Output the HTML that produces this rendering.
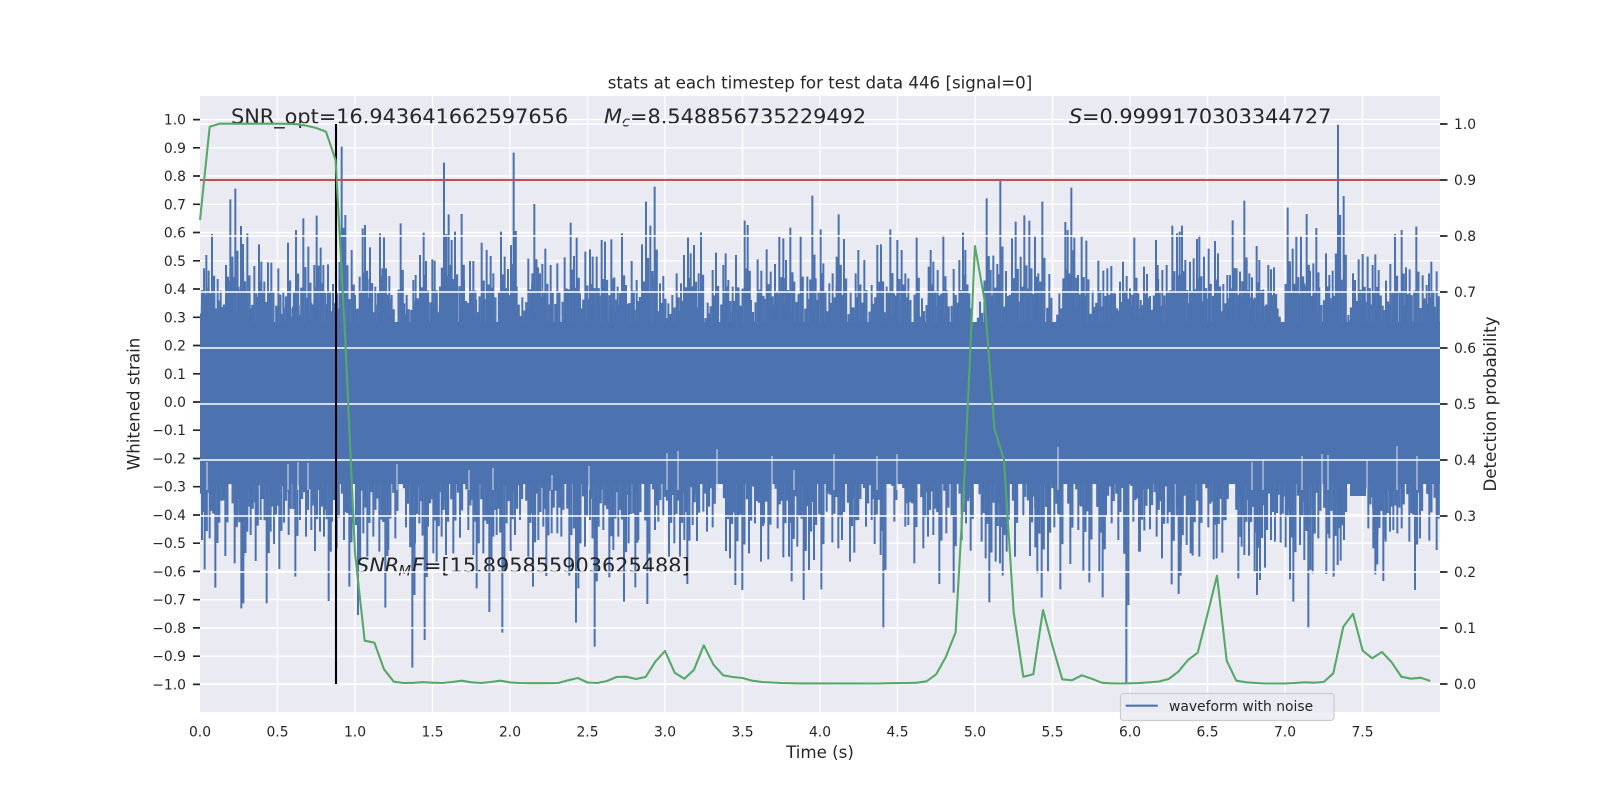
<!DOCTYPE html>
<html><head><meta charset="utf-8"><style>html,body{margin:0;padding:0;background:#fff;width:1600px;height:800px;overflow:hidden}svg{display:block}text{font-family:"DejaVu Sans","Liberation Sans",sans-serif;fill:#262626}</style></head><body>
<svg width="1600" height="800" viewBox="0 0 1600 800" xmlns="http://www.w3.org/2000/svg">
<defs><clipPath id="ax"><rect x="200" y="96" width="1240" height="616"/></clipPath>
<path id="a" d="M186 690V800M192 625V800M199 585V800M206 632V800M216 522V800M223 700V800M233 657V800M242 692V800M258 615V800M264 650V800M271 418V800M277 610V800M286 386V800M296 680V800M303 498V800M309 552V800M322 520V800M329 700V800M343 618V800M357 553V800M364 605V800M373 665V800M384 607V800M394 608V800M415 625V800M430 695V800M444 548V800M452 745V800M459 740V800M468 510V800M476 735V800M490 475V800M505 560V800M514 728V800M523 615V800M530 467V800M542 563V800M550 615V800M564 613V800M579 672V800M591 700V800M605 260V800M616 465V800M635 570V800M645 705V800M659 650V800M668 505V800M675 495V800M683 657V800M690 562V800M706 680V800M720 520V800M727 625V800M732 532V800M738 625V800M748 648V800M755 705V800M782 490V800M793 730V800M800 705V800M820 660V800M827 645V800M840 585V800M851 518V800M858 603V800M877 598V800M884 602V800M900 680V800M906 625V800M912 308V800M919 522V800M926 463V800M935 540V800M945 515V800M965 462V800M972 660V800M990 603V800M1000 603V800M1008 720V800M1025 548V800M1040 570V800M1052 588V800M1060 640V800M1083 515V800M1094 590V800M1104 627V800M1113 555V800M1121 278V800M1130 680V800M1147 712V800M1165 596V800M1177 640V800M1183 432V800M1194 622V800M1200 640V800M1207 612V800M1216 566V800M1232 615V800M1252 610V800M1274 592V800M1292 488V800M1302 588V800M1310 533V800M1320 700V800M1336 575V800M1350 568V800M1358 590V800M1370 590V800M1385 540V800M1395 545V800M1414 538V800M1423 652V800M1433 680V800M1446 520V800M1458 675V800M1475 603V800M1490 660V800"/>
<path id="b" d="M6 553V800M18 425V800M31 497V800M44 380V800M60 670V800M70 648V800M85 730V800M97 705V800M110 640V800M123 670V800M132 585V800M144 533V800M152 580V800M162 555V800M176 640V800M183 517V800M203 728V800M218 630V800M228 578V800M250 615V800M257 580V800M265 660V800M278 680V800M288 585V800M296 685V800M314 482V800M323 495V800M333 720V800M353 598V800M364 632V800M380 568V800M392 635V800M405 612V800M418 530V800M430 535V800M438 600V800M451 503V800M463 665V800M482 527V800M502 650V800M517 407V800M527 655V800M542 508V800M550 610V800M568 670V800M578 640V800M590 590V800M596 463V800M612 537V800M632 695V800M647 640V800M655 570V800M673 600V800M695 675V800M712 555V800M723 553V800M740 680V800M751 508V800M762 700V800M772 540V800M785 570V800M796 640V800M805 655V800M830 533V800M846 715V800M866 620V800M872 570V800M880 605V800M893 630V800M910 525V800M920 690V800M941 627V800M958 600V800M969 518V800M976 570V800M988 700V800M1020 725V800M1040 415V800M1052 630V800M1060 587V800M1072 612V800M1081 363V800M1098 633V800M1116 535V800M1127 485V800M1142 590V800M1153 466V800M1168 482V800M1185 527V800M1195 640V800M1207 425V800M1228 642V800M1258 700V800M1270 655V800M1276 486V800M1283 510V800M1294 383V800M1303 533V800M1314 645V800M1325 530V800M1339 542V800M1358 692V800M1375 602V800M1390 632V800M1402 625V800M1414 618V800M1425 700V800M1440 665V800M1449 605V800M1460 648V800M1470 685V800M1483 533V800M1495 700V800"/>
<path id="c" d="M122 720V800M132 620V800M141 642V800M150 708V800M168 540V800M173 615V800M187 630V800M200 615V800M217 497V800M222 652V800M231 520V800M239 515V800M246 497V800M256 600V800M270 605V800M281 595V800M291 537V800M298 525V800M312 590V800M326 566V800M345 543V800M354 580V800M370 672V800M382 645V800M390 645V800M398 481V800M410 625V800M420 635V800M433 422V800M440 600V800M448 640V800M456 652V800M470 558V800M478 600V800M490 688V800M505 615V800M513 628V800M522 622V800M533 745V800M563 443V800M570 615V800M578 566V800M589 530V800M603 526V800M613 670V800M620 462V800M630 632V800M640 610V800M649 504V800M658 682V800M678 580V800M688 645V800M698 632V800M714 190V800M731 408V800M745 765V800M759 640V800M765 660V800M776 598V800M788 582V800M803 590V800M818 615V800M826 583V800M836 630V800M848 737V800M858 662V800M871 612V800M885 522V800M905 510V800M918 622V800M929 628V800M949 500V800M968 646V800M980 675V800M987 640V800M994 605V800M1010 634V800"/>
<path id="d" d="M186 60V300M194 60V388M209 60V295M226 60V443M238 60V248M256 60V348M284 60V370M291 60V240M304 60V505M310 60V490M322 60V275M332 60V285M347 60V363M362 60V240M380 60V490M392 60V275M402 60V312M418 60V387M432 60V248M446 60V285M466 60V410M480 60V240M498 60V290M514 60V270M525 60V333M540 60V275M552 60V290M566 60V483M576 60V245M590 60V325M612 60V300M628 60V440M654 60V525M670 60V280M682 60V350M700 60V290M718 60V335M736 60V503M745 60V330M766 60V295M798 60V262M817 60V683M825 60V310M838 60V250M854 60V600M864 60V260M880 60V340M890 60V365M905 60V290M918 60V345M940 60V340M960 60V293M985 60V270M1000 60V345M1010 60V445M1030 60V340M1048 60V516M1060 60V290M1070 60V285M1087 60V578M1100 60V250M1112 60V333M1125 60V285M1140 60V240M1165 60V350M1179 60V440M1195 60V300M1210 60V260M1219 60V408M1235 60V280M1252 60V280M1264 60V290M1288 60V407M1308 60V548M1315 60V445M1335 60V320M1350 60V240M1364 60V620M1376 60V260M1390 60V270M1408 60V412M1420 60V330M1435 60V290M1452 60V485M1466 60V310M1486 60V442M1495 60V300"/>
<path id="e" d="M22 60V492M45 60V270M55 60V245M70 60V230M87 60V350M103 60V310M120 60V350M133 60V300M142 60V432M158 60V255M171 60V303M190 60V215M201 60V275M218 60V262M258 60V333M270 60V355M286 60V435M297 60V230M307 60V450M327 60V340M345 60V250M363 60V365M372 60V250M385 60V358M413 60V265M430 60V352M447 60V350M455 60V424M472 60V320M491 60V480M507 60V390M522 60V360M544 60V448M560 60V215M577 60V308M595 60V325M606 60V300M630 60V365M643 60V338M655 60V240M678 60V260M695 60V240M704 60V312M722 60V345M730 60V567M763 60V245M796 60V260M805 60V255M823 60V370M850 60V325M864 60V290M880 60V285M898 60V432M919 60V280M941 60V458M965 60V300M978 60V250M992 60V332M1025 60V305M1037 60V355M1048 60V487M1067 60V365M1080 60V370M1088 60V407M1100 60V335M1125 60V350M1150 60V230M1170 60V348M1186 60V322M1192 60V400M1205 60V473M1224 60V395M1243 60V262M1261 60V448M1291 60V372M1315 60V270M1330 60V392M1348 60V427M1378 60V395M1388 60V472M1398 60V225M1415 60V250M1435 60V300M1453 60V260M1459 60V730M1480 60V245M1497 60V335"/>
<path id="f" d="M240 60V335M253 60V272M270 60V268M290 60V290M306 60V355M323 60V250M335 60V433M356 60V462M362 60V407M380 60V315M392 60V340M398 60V347M418 60V350M445 60V262M461 60V358M470 60V355M487 60V338M497 60V240M535 60V415M545 60V320M553 60V345M567 60V347M584 60V395M591 60V465M600 60V420M615 60V383M633 60V300M645 60V305M662 60V308M677 60V322M690 60V418M700 60V485M720 60V315M733 60V360M745 60V567M758 60V400M775 60V295M799 60V402M808 60V295M821 60V410M833 60V375M842 60V362M852 60V300M925 60V265M940 60V325M946 60V403M952 60V373M970 60V423M977 60V305M990 60V275M1000 60V270M1012 60V280M1025 60V265M1048 60V305M1065 60V450M1080 60V295M1108 60V302M1130 60V330"/>
</defs>
<rect width="1600" height="800" fill="#fff"/>
<rect x="200" y="96" width="1240" height="616" fill="#eaeaf2"/>
<path fill="none" stroke="#fff" stroke-width="1.4" d="M200 119.6H1440M200 147.8H1440M200 176H1440M200 204.3H1440M200 232.5H1440M200 260.8H1440M200 289H1440M200 317.3H1440M200 345.5H1440M200 373.8H1440M200 402H1440M200 430.2H1440M200 458.5H1440M200 486.7H1440M200 515H1440M200 543.2H1440M200 571.4H1440M200 599.7H1440M200 627.9H1440M200 656.2H1440M200 684.4H1440M277.5 96V712M355 96V712M432.5 96V712M510 96V712M587.5 96V712M665 96V712M742.5 96V712M820 96V712M897.5 96V712M975 96V712M1052.5 96V712M1130 96V712M1207.5 96V712M1285 96V712M1362.5 96V712"/>
<g clip-path="url(#ax)">
<rect x="200" y="322" width="1240" height="162" fill="#4c72b0"/>
<rect x="1350" y="484" width="16" height="12" fill="#4c72b0"/>
<g fill="none" stroke="#4c72b0" stroke-width="6">
<g transform="translate(140,60) scale(.33333)"><use href="#a" stroke-width="7" transform="translate(6,800) scale(1,.55) translate(0,-800)"/><use href="#a" stroke-width="7" transform="translate(-6,800) scale(1,.36) translate(0,-800)"/><use href="#a"/></g>
<g transform="translate(640,60) scale(.33333)"><use href="#b" stroke-width="7" transform="translate(6,800) scale(1,.55) translate(0,-800)"/><use href="#b" stroke-width="7" transform="translate(-6,800) scale(1,.36) translate(0,-800)"/><use href="#b"/></g>
<g transform="translate(1100,60) scale(.33333)"><use href="#c" stroke-width="7" transform="translate(6,800) scale(1,.55) translate(0,-800)"/><use href="#c" stroke-width="7" transform="translate(-6,800) scale(1,.36) translate(0,-800)"/><use href="#c"/></g>
<g transform="translate(140,440) scale(.33333)"><use href="#d" stroke-width="7" transform="translate(6,60) scale(1,.65) translate(0,-60)"/><use href="#d" stroke-width="7" transform="translate(-6,60) scale(1,.42) translate(0,-60)"/><use href="#d"/></g>
<g transform="translate(640,440) scale(.33333)"><use href="#e" stroke-width="7" transform="translate(6,60) scale(1,.65) translate(0,-60)"/><use href="#e" stroke-width="7" transform="translate(-6,60) scale(1,.42) translate(0,-60)"/><use href="#e"/></g>
<g transform="translate(1060,440) scale(.33333)"><use href="#f" stroke-width="7" transform="translate(6,60) scale(1,.65) translate(0,-60)"/><use href="#f" stroke-width="7" transform="translate(-6,60) scale(1,.42) translate(0,-60)"/><use href="#f"/></g>
</g>
<path fill="none" stroke="#c9d0e2" stroke-width="1.2" d="M207 462V490M288 464V490M298 462V490M308 463V490M397 464V490M469 470V490M493 468V490M552 475V490M589 466V490M667 453V490M678 451V490M717 449V490M772 456V490M794 470V490M834 454V490M877 456V490M897 454V490M1058 447V490M1252 462V490M1263 460V490M1302 456V490M1322 454V490M1328 455V490M1367 460V490M1397 446V490M1417 456V490"/>
</g>
<!-- annotations -->
<text x="231" y="123.3" font-size="20.83">SNR_opt=16.943641662597656</text>
<text x="604" y="123.3" font-size="20.83" font-style="oblique">M</text>
<text x="622" y="126.5" font-size="14.6" font-style="oblique">c</text>
<text x="630" y="123.3" font-size="20.83">=8.548856735229492</text>
<text x="1069" y="123.3" font-size="20.83" font-style="oblique">S</text>
<text x="1082" y="123.3" font-size="20.83">=0.9999170303344727</text>
<text x="356" y="572.3" font-size="20.83" font-style="oblique">SNR</text>
<text x="398.5" y="575.5" font-size="14.6" font-style="oblique">M</text>
<text x="412" y="572.3" font-size="20.83" font-style="oblique">F</text>
<text x="424" y="572.3" font-size="20.83">=[15.895855903625488]</text>
<!-- right-axis grid on top -->
<path fill="none" stroke="#fff" stroke-width="1.4" d="M200 124H1440M200 236H1440M200 292H1440M200 348H1440M200 404H1440M200 460H1440M200 516H1440M200 572H1440M200 628H1440M200 684H1440"/>
<path fill="none" stroke="#c44e52" stroke-width="2.08" d="M200 180H1440"/>
<path fill="none" stroke="#000" stroke-width="2.08" d="M336 124V684"/>
<path fill="none" stroke="#55a868" stroke-width="2.08" stroke-linejoin="round" d="M200 220L209.7 126.7L219.4 123.7L229 123.7L277.5 123.7L287.2 123.8L297 124.2L306.7 125.7L316.3 128L326 131.7L335.6 160L345.3 340L355 553L364.7 640.7L374.4 642.7L384 669.3L393.8 681.7L403.4 683L413 682.8L422.8 682.2L432.5 682.7L442 683L452 682L461.6 680.7L471.2 682.3L481 683L490.6 682L500.3 680.7L510 682.4L519.7 683L529.4 683.2L539 683.2L548.7 683.2L558.4 683L568 680.3L577.8 678L587.5 682.5L597.2 683L606.9 681L616.6 677L626.3 676.7L636 679L645.6 677L655.3 661.7L665 651L674.7 672.7L684.4 678.7L694 669.7L703.8 645.3L713.5 664.7L723.2 675.3L732.9 677L742.5 678L752.2 680.7L762 682L771.6 682.5L781.3 683L800 683.4L878 683.5L887.8 683.2L907 683L917 682.7L926.6 681.3L936.2 674.3L945.7 657.3L955.6 632.3L965.3 460L975 246L984.7 301L994.4 428.6L1004 460L1013.7 612.3L1023.3 676.7L1033.3 674.3L1043 610L1052.7 646.7L1062.3 679.3L1072 680.3L1081.7 675.3L1091.7 678.7L1101.7 682.7L1110.6 683.3L1120.3 683.5L1130 683.3L1139.7 683L1149.4 682.3L1159 681.5L1168.7 679L1178.3 671.7L1188 660L1197.7 652.7L1207.3 615L1217 575.7L1226.7 660.7L1236.3 680.7L1246.3 682.3L1256 683L1265.6 683.5L1285 683.5L1294.7 683L1304.4 682.3L1314 682.7L1323.7 682L1333.3 673.3L1343.3 626.7L1353 613.7L1362.7 650.7L1372.3 658.3L1382 652L1391.7 662.3L1401.3 676.7L1411 678.7L1420.7 677.7L1430.3 681"/>
<!-- ticks -->
<path fill="none" stroke="#262626" stroke-width="1.7" d="M193 119.6H200M193 147.8H200M193 176H200M193 204.3H200M193 232.5H200M193 260.8H200M193 289H200M193 317.3H200M193 345.5H200M193 373.8H200M193 402H200M193 430.2H200M193 458.5H200M193 486.7H200M193 515H200M193 543.2H200M193 571.4H200M193 599.7H200M193 627.9H200M193 656.2H200M193 684.4H200M1440 124H1447.5M1440 180H1447.5M1440 236H1447.5M1440 292H1447.5M1440 348H1447.5M1440 404H1447.5M1440 460H1447.5M1440 516H1447.5M1440 572H1447.5M1440 628H1447.5M1440 684H1447.5"/>
<g font-size="13.89" text-anchor="end">
<text x="186" y="124.6">1.0</text><text x="186" y="152.8">0.9</text><text x="186" y="181">0.8</text><text x="186" y="209.3">0.7</text><text x="186" y="237.5">0.6</text><text x="186" y="265.8">0.5</text><text x="186" y="294">0.4</text><text x="186" y="322.3">0.3</text><text x="186" y="350.5">0.2</text><text x="186" y="378.8">0.1</text><text x="186" y="407">0.0</text><text x="186" y="435.2">−0.1</text><text x="186" y="463.5">−0.2</text><text x="186" y="491.7">−0.3</text><text x="186" y="520">−0.4</text><text x="186" y="548.2">−0.5</text><text x="186" y="576.4">−0.6</text><text x="186" y="604.7">−0.7</text><text x="186" y="632.9">−0.8</text><text x="186" y="661.2">−0.9</text><text x="186" y="689.4">−1.0</text>
</g>
<g font-size="13.89">
<text x="1454" y="129">1.0</text><text x="1454" y="185">0.9</text><text x="1454" y="241">0.8</text><text x="1454" y="297">0.7</text><text x="1454" y="353">0.6</text><text x="1454" y="409">0.5</text><text x="1454" y="465">0.4</text><text x="1454" y="521">0.3</text><text x="1454" y="577">0.2</text><text x="1454" y="633">0.1</text><text x="1454" y="689">0.0</text>
</g>
<g font-size="13.89" text-anchor="middle">
<text x="200" y="736.7">0.0</text><text x="277.5" y="736.7">0.5</text><text x="355" y="736.7">1.0</text><text x="432.5" y="736.7">1.5</text><text x="510" y="736.7">2.0</text><text x="587.5" y="736.7">2.5</text><text x="665" y="736.7">3.0</text><text x="742.5" y="736.7">3.5</text><text x="820" y="736.7">4.0</text><text x="897.5" y="736.7">4.5</text><text x="975" y="736.7">5.0</text><text x="1052.5" y="736.7">5.5</text><text x="1130" y="736.7">6.0</text><text x="1207.5" y="736.7">6.5</text><text x="1285" y="736.7">7.0</text><text x="1362.5" y="736.7">7.5</text>
</g>
<text x="820" y="88.3" font-size="16.67" text-anchor="middle">stats at each timestep for test data 446 [signal=0]</text>
<text x="820" y="758" font-size="16.67" text-anchor="middle">Time (s)</text>
<text transform="translate(139.5,404) rotate(-90)" font-size="16.67" text-anchor="middle">Whitened strain</text>
<text transform="translate(1496,404) rotate(-90)" font-size="16.67" text-anchor="middle">Detection probability</text>
<!-- legend -->
<rect x="1120.5" y="693.5" width="213.5" height="27" rx="3" fill="#eaeaf2" fill-opacity=".8" stroke="#cccccc" stroke-width="1.2"/>
<path stroke="#4c72b0" stroke-width="2.08" d="M1125.7 705.7H1157.7"/>
<text x="1169" y="711" font-size="13.89">waveform with noise</text>
</svg>
</body></html>
